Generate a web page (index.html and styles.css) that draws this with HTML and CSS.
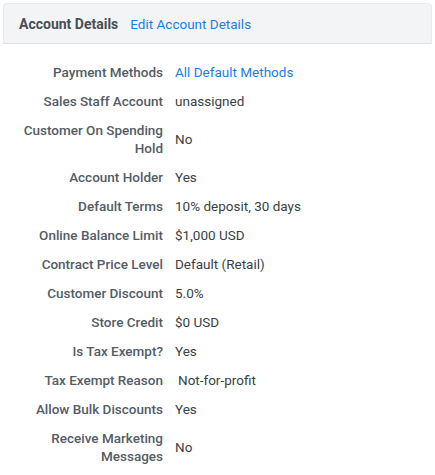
FILE: index.html
```html
<!DOCTYPE html>
<html>
<head>
    <title>Account Details</title>
    <link rel="stylesheet" href="styles.css">
</head>
<body>
    <div class="panel">
        <div class="panel-header">
            <h3>Account Details</h3>
            <a href="#" class="edit-link">Edit Account Details</a>
        </div>
        <dl class="details">
            <dt>Payment Methods</dt>
            <dd><a href="#">All Default Methods</a></dd>
            <dt>Sales Staff Account</dt>
            <dd>unassigned</dd>
            <dt>Customer On Spending Hold</dt>
            <dd>No</dd>
            <dt>Account Holder</dt>
            <dd>Yes</dd>
            <dt>Default Terms</dt>
            <dd>10% deposit, 30 days</dd>
            <dt>Online Balance Limit</dt>
            <dd>$1,000 USD</dd>
            <dt>Contract Price Level</dt>
            <dd>Default (Retail)</dd>
            <dt>Customer Discount</dt>
            <dd>5.0%</dd>
            <dt>Store Credit</dt>
            <dd>$0 USD</dd>
            <dt>Is Tax Exempt?</dt>
            <dd>Yes</dd>
            <dt>Tax Exempt Reason</dt>
            <dd class="indent">Not-for-profit</dd>
            <dt>Allow Bulk Discounts</dt>
            <dd>Yes</dd>
            <dt>Receive Marketing Messages</dt>
            <dd>No</dd>
        </dl>
    </div>
</body>
</html>
```

FILE: styles.css
```css
body {
    font-family: Roboto, "Noto Sans", sans-serif;
    font-size: 13.5px;
    color: #3a3f45;
    background-color: #ffffff;
    margin: 3px;
}
a {
    color: #1b80e4;
    text-decoration: none;
}
.panel-header {
    display: flex;
    align-items: center;
    gap: 12px;
    height: 39px;
    padding: 0 15px;
    background-color: #f3f4f6;
    border: 1px solid #e9eaec;
    border-bottom-color: #dcdee1;
    border-radius: 4px 4px 0 0;
}
.panel-header h3 {
    margin: 0;
    font-size: 14px;
    font-weight: 700;
    color: #4a4e54;
}
.edit-link {
    font-size: 13.5px;
}
.details {
    display: grid;
    grid-template-columns: 160px 1fr;
    column-gap: 12px;
    row-gap: 11px;
    margin: 19px 0 0 0;
    line-height: 18px;
}
dt {
    font-weight: 500;
    color: #545c66;
    text-align: right;
    align-self: center;
}
dd {
    margin: 0;
    align-self: center;
    color: #3a3f45;
}
dd.indent {
    padding-left: 3px;
}
```
